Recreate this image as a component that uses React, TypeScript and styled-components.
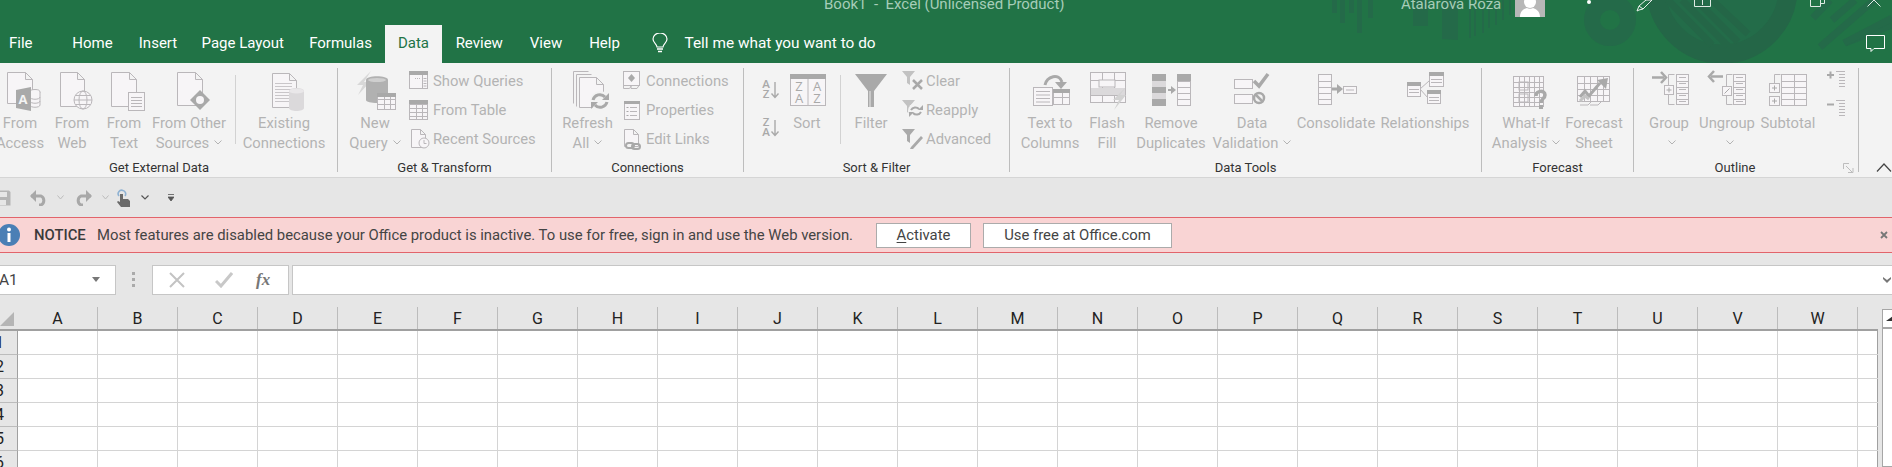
import type { ReactNode } from 'react';
import styled, { createGlobalStyle } from 'styled-components';

const STROKE = '#bab7ba';
const PAPER = '#f7f5f7';
const DARK = '#a9a9a9';
const SOFT = '#dbd9db';

const GlobalStyle = createGlobalStyle`
  html, body {
    margin: 0;
    padding: 0;
    background: #fff;
    overflow: hidden;
  }
  body {
    font-family: Roboto, "Open Sans", sans-serif;
  }
`;

const Page = styled.div`
  width: 1892px;
  height: 467px;
  overflow: hidden;
  display: flex;
  flex-direction: column;
`;

const Header = styled.div`
  position: relative;
  height: 63px;
  flex: none;
  background: #217346;
  overflow: hidden;
`;

const Pattern = styled.svg`
  position: absolute;
  left: 0;
  top: 0;
`;

const TitleRow = styled.div`
  position: relative;
  height: 25px;
  display: flex;
  align-items: flex-start;
  overflow: hidden;
`;

const TitleText = styled.div<{ $left: number; $width: number }>`
  margin-left: ${p => p.$left}px;
  width: ${p => p.$width}px;
  margin-top: -6px;
  line-height: 20px;
  font-size: 15px;
  color: #a6cdb8;
  white-space: pre;
  flex: none;
`;

const Avatar = styled.svg`
  flex: none;
  margin-left: 13px;
`;

const WindowIcon = styled.svg<{ $gap: number }>`
  flex: none;
  margin-left: ${p => p.$gap}px;
`;

const TabRow = styled.div`
  position: relative;
  height: 38px;
  display: flex;
  align-items: stretch;
`;

const Tab = styled.div<{ $w: number; $active?: boolean; $left?: boolean }>`
  width: ${p => p.$w}px;
  flex: none;
  display: flex;
  align-items: center;
  justify-content: ${p => (p.$left ? 'flex-start' : 'center')};
  padding-left: ${p => (p.$left ? 9 : 0)}px;
  box-sizing: border-box;
  padding-bottom: 2px;
  font-size: 15px;
  color: ${p => (p.$active ? '#217346' : '#fff')};
  background: ${p => (p.$active ? '#f3f3f3' : 'transparent')};
`;

const TellMe = styled.div`
  display: flex;
  align-items: center;
  gap: 17px;
  margin-left: 18px;
  padding-bottom: 2px;
  font-size: 15.4px;
  color: #fff;
`;

const CommentIcon = styled.svg`
  margin-left: auto;
  margin-right: 7px;
  margin-top: 10px;
`;

const Ribbon = styled.div`
  height: 115px;
  flex: none;
  box-sizing: border-box;
  display: flex;
  background: #f3f3f3;
  border-bottom: 1px solid #d5d5d5;
  margin-left: -19px;
  width: 1911px;
`;

const Group = styled.div<{ $w: number; $pad?: number }>`
  position: relative;
  width: ${p => p.$w}px;
  flex: none;
  box-sizing: border-box;
  margin: 5px 0;
  height: 104px;
  border-right: 1px solid #bdbdbd;
  display: flex;
  flex-direction: column;
  padding-left: ${p => p.$pad || 0}px;
`;

const GroupBody = styled.div`
  height: 89px;
  display: flex;
  flex: none;
`;

const GroupLabel = styled.div<{ $shift?: number; $back?: number }>`
  height: 15px;
  line-height: 21px;
  margin-left: -${p => p.$back || 0}px;
  padding-right: ${p => p.$shift || 0}px;
  text-align: center;
  font-size: 13px;
  color: #333;
`;

const BigButton = styled.div<{ $w: number }>`
  width: ${p => p.$w}px;
  flex: none;
  display: flex;
  flex-direction: column;
  align-items: center;
`;

const IconBox = styled.div`
  height: 45px;
  flex: none;
`;

const BigLine = styled.div`
  height: 20px;
  line-height: 20px;
  white-space: nowrap;
  font-size: 14.8px;
  color: #b3b3b3;
  display: flex;
  align-items: center;
  justify-content: center;
`;

const Caret = styled.svg`
  margin-left: 5px;
  margin-top: -2px;
`;

const InnerSep = styled.div<{ $left: number }>`
  width: 1px;
  height: 69px;
  margin: 7px 0 0 ${p => p.$left}px;
  background: #d2d2d2;
  flex: none;
`;

const Stack = styled.div<{ $w?: number }>`
  flex: ${p => (p.$w ? 'none' : 1)};
  width: ${p => (p.$w ? `${p.$w}px` : 'auto')};
  margin-top: -2px;
  display: flex;
  flex-direction: column;
`;

const SmallRow = styled.div`
  height: 29px;
  display: flex;
  align-items: center;
  white-space: nowrap;
  font-size: 14.8px;
  color: #b3b3b3;
`;

const SmallIcon = styled.svg`
  flex: none;
  width: 24px;
  height: 24px;
  margin-right: 1px;
`;

const SortColumn = styled.div`
  width: 24px;
  margin-left: 13px;
  flex: none;
  display: flex;
  flex-direction: column;
  gap: 14px;
  padding-top: 10px;
`;

const Launcher = styled.svg`
  position: absolute;
  right: 4px;
  bottom: -2px;
`;

const Collapse = styled.div`
  flex: 1;
  display: flex;
  align-items: flex-end;
  justify-content: flex-start;
  padding: 0 0 5px 17px;
`;

const QuickBar = styled.div`
  height: 39px;
  flex: none;
  background: #e6e6e6;
  display: flex;
  align-items: center;
`;

const QuickIcon = styled.svg<{ $left: number }>`
  flex: none;
  margin-left: ${p => p.$left}px;
`;

const Notice = styled.div`
  height: 36px;
  flex: none;
  box-sizing: border-box;
  background: #f9d4d4;
  border-top: 1px solid #e2646b;
  border-bottom: 1px solid #e2646b;
  display: flex;
  align-items: center;
  color: #444;
  font-size: 14.85px;
`;

const InfoIcon = styled.svg`
  flex: none;
  margin-left: -2px;
`;

const NoticeTitle = styled.span`
  margin-left: 14px;
  width: 63px;
  flex: none;
  font-weight: 500;
  color: #3a3a3a;
`;

const NoticeText = styled.span`
  width: 779px;
  flex: none;
  white-space: nowrap;
`;

const NoticeButton = styled.div<{ $w: number; $gap: number }>`
  width: ${p => p.$w}px;
  margin-left: ${p => p.$gap}px;
  height: 25px;
  box-sizing: border-box;
  flex: none;
  background: #fff;
  border: 1px solid #ababab;
  display: flex;
  align-items: center;
  justify-content: center;
  color: #444;
  u {
    text-underline-offset: 2px;
  }
`;

const NoticeClose = styled.svg`
  margin-left: auto;
  margin-right: 4px;
`;

const FormulaBar = styled.div`
  height: 44px;
  flex: none;
  box-sizing: border-box;
  background: #e6e6e6;
  padding-top: 12px;
  display: flex;
  align-items: flex-start;
`;

const NameBox = styled.div`
  width: 117px;
  height: 30px;
  margin-left: -1px;
  flex: none;
  box-sizing: border-box;
  background: #fff;
  border: 1px solid #c6c6c6;
  display: flex;
  align-items: center;
  font-size: 15.5px;
  color: #444;
`;

const NameText = styled.span`
  flex: 1;
  margin-left: -1px;
`;

const Grip = styled.svg`
  flex: none;
  margin: 6px 17px 0 16px;
`;

const FuncBox = styled.div`
  width: 137px;
  height: 30px;
  flex: none;
  box-sizing: border-box;
  background: #fff;
  border: 1px solid #c6c6c6;
  display: flex;
  align-items: center;
`;

const FuncIcon = styled.svg<{ $left: number }>`
  flex: none;
  margin-left: ${p => p.$left}px;
`;

const FormulaInput = styled.div`
  flex: 1;
  height: 30px;
  margin-left: 3px;
  box-sizing: border-box;
  background: #fff;
  border: 1px solid #c6c6c6;
  border-right: none;
  display: flex;
  align-items: center;
  justify-content: flex-end;
  padding-right: 1px;
`;

const FxText = styled.span`
  font-family: "Liberation Serif", serif;
  font-style: italic;
  font-weight: 700;
  font-size: 17px;
  color: #777;
  margin-left: 23px;
`;

const Sheet = styled.div`
  flex: 1;
  display: flex;
  background: #e6e6e6;
  min-height: 0;
`;

const SheetGrid = styled.div`
  width: 1878px;
  flex: none;
  display: flex;
  flex-direction: column;
  background: #fff;
`;

const ColumnHeader = styled.div`
  height: 34px;
  flex: none;
  box-sizing: border-box;
  display: flex;
  background: #e6e6e6;
  border-bottom: 2px solid #a0a0a0;
  padding-top: 10px;
`;

const Corner = styled.div`
  width: 18px;
  flex: none;
  display: flex;
  align-items: flex-end;
`;

const ColumnCell = styled.div<{ $w: number }>`
  width: ${p => p.$w}px;
  flex: none;
  box-sizing: border-box;
  border-right: 1px solid #bcbcbc;
  line-height: 24px;
  text-align: center;
  font-size: 16px;
  color: #222;
`;

const Row = styled.div`
  height: 24px;
  flex: none;
  box-sizing: border-box;
  display: flex;
  border-bottom: 1px solid #d4d4d4;
`;

const RowNumber = styled.div`
  width: 18px;
  flex: none;
  box-sizing: border-box;
  margin-bottom: -1px;
  background: #e6e6e6;
  border-right: 1px solid #a0a0a0;
  border-bottom: 1px solid #bcbcbc;
  overflow: hidden;
  display: flex;
  align-items: center;
  justify-content: center;
  font-size: 16px;
  color: #222;
`;

const RowDigit = styled.span`
  margin-left: -18px;
`;

const Cell = styled.div<{ $w: number }>`
  width: ${p => p.$w}px;
  flex: none;
  box-sizing: border-box;
  border-right: 1px solid #d4d4d4;
`;

const TailCell = styled(Cell)`
  border-right: 1px solid #a0a0a0;
`;

const Scrollbar = styled.div`
  width: 14px;
  margin-left: 4px;
  margin-top: 12px;
  flex: none;
  box-sizing: border-box;
  background: #fff;
  border: 1px solid #a6a6a6;
  border-right: none;
  display: flex;
  flex-direction: column;
`;

const ScrollUp = styled.div`
  height: 19px;
  box-sizing: border-box;
  border-bottom: 2px solid #a6a6a6;
  display: flex;
  align-items: center;
  padding-left: 3px;
`;

// shared drawing pieces for the ribbon icons

const Doc = ({ x, y, w, h, f = 7 }: { x: number; y: number; w: number; h: number; f?: number }) => (
  <path
    d={`M${x} ${y}h${w - f}l${f} ${f}v${h - f}h${-w}zM${x + w - f} ${y}v${f}h${f}`}
    fill={PAPER}
    stroke={STROKE}
  />
);

const Lines = ({ x, y, w, n, gap, color = STROKE }: { x: number; y: number; w: number; n: number; gap: number; color?: string }) => (
  <path
    d={Array.from({ length: n }, (_, i) => `M${x} ${y + i * gap}h${w}`).join('')}
    stroke={color}
    fill="none"
  />
);

const Table = ({ x, y, w, h, cols, rows }: { x: number; y: number; w: number; h: number; cols: number; rows: number }) => {
  const v = Array.from({ length: cols - 1 }, (_, i) => `M${Math.round(x + ((i + 1) * w) / cols) + 0.5} ${y}v${h}`);
  const t = Array.from({ length: rows - 1 }, (_, i) => `M${x} ${Math.round(y + ((i + 1) * h) / rows) + 0.5}h${w}`);
  return (
    <>
      <rect x={x} y={y} width={w} height={h} fill={PAPER} stroke={STROKE} />
      <path d={[...v, ...t].join('')} stroke={STROKE} fill="none" />
    </>
  );
};

const Spin = ({ cx, cy, r, w = 3 }: { cx: number; cy: number; r: number; w?: number }) => (
  <g fill="none" stroke={DARK} strokeWidth={w}>
    <path d={`M${cx - r} ${cy - 1}A${r} ${r} 0 0 1 ${cx + r - 2} ${cy - r + 3}`} />
    <path d={`M${cx + r} ${cy + 1}A${r} ${r} 0 0 1 ${cx - r + 2} ${cy + r - 3}`} />
    <path d={`M${cx + r + 2} ${cy - r - 1}v${r}h${-r}z`} fill={DARK} stroke="none" />
    <path d={`M${cx - r - 2} ${cy + r + 1}v${-r}h${r}z`} fill={DARK} stroke="none" />
  </g>
);

const Funnel = ({ light }: { light?: boolean }) => (
  <path d="M1 2h13l-5 6v8l-3-2v-6z" fill={light ? '#c2c2c2' : DARK} />
);

const Big = ({ children }: { children: ReactNode }) => (
  <svg width="44" height="45" viewBox="0 0 44 45">
    {children}
  </svg>
);

const icons: Record<string, ReactNode> = {
  access: (
    <Big>
      <Doc x={9.5} y={4.5} w={25} h={31} />
      <ellipse cx="37" cy="24" rx="5" ry="2.5" fill={PAPER} stroke={STROKE} />
      <path d="M32 24v13c0 3 10 3 10 0V24M32 29c0 3 10 3 10 0M32 33c0 3 10 3 10 0" fill={PAPER} stroke={STROKE} />
      <path d="M18 22l15-3v24l-15-3z" fill={DARK} />
      <text x="25" y="36" textAnchor="middle" fontSize="13" fontWeight="700" fill="#f3f3f3" fontFamily="Open Sans">A</text>
    </Big>
  ),
  web: (
    <Big>
      <Doc x={10.5} y={4.5} w={24} h={34} />
      <circle cx="33" cy="32" r="9" fill={PAPER} stroke={STROKE} />
      <ellipse cx="33" cy="32" rx="4" ry="9" fill="none" stroke={STROKE} />
      <path d="M24 32h18M25.5 27.5h15M25.5 36.5h15" stroke={STROKE} fill="none" />
    </Big>
  ),
  text: (
    <Big>
      <Doc x={9.5} y={4.5} w={25} h={34} />
      <rect x="26.5" y="24.5" width="16" height="18" fill={PAPER} stroke={STROKE} />
      <Lines x={29} y={29.5} w={11} n={4} gap={3} />
    </Big>
  ),
  other: (
    <Big>
      <Doc x={10.5} y={4.5} w={25} h={33} />
      <path d="M33 22l10 10-10 10-10-10z" fill={DARK} />
      <circle cx="33" cy="32" r="6.5" fill={DARK} />
      <circle cx="33" cy="32" r="4" fill={PAPER} />
    </Big>
  ),
  existing: (
    <Big>
      <Doc x={10.5} y={5.5} w={24} h={34} />
      <Lines x={13} y={15.5} w={17} n={7} gap={3} color="#c9c6c9" />
      <path d="M27 23c0-4 15-4 15 0v17c0 4-15 4-15 0z" fill={SOFT} />
      <ellipse cx="34.5" cy="23" rx="7.5" ry="2.5" fill="#e9e7e9" />
    </Big>
  ),
  newQuery: (
    <Big>
      <path d="M18 3L4 17h6L5 27l12-13h-6z" fill="#d8d8d8" />
      <path d="M13 12c0-5 22-5 22 0v20c0 4-22 4-22 0z" fill="#b1b1b1" />
      <ellipse cx="24" cy="12" rx="9" ry="2" fill="#cfcfcf" />
      <Table x={24.5} y={25.5} w={18} h={16} cols={3} rows={3} />
      <rect x="24" y="25" width="19" height="4" fill={DARK} />
    </Big>
  ),
  refresh: (
    <Big>
      <path d="M7.5 3.5h15M7.5 3.5v32M10.5 6.5h15M10.5 6.5v32" fill="none" stroke={STROKE} />
      <Doc x={13.5} y={9.5} w={24} h={30} />
      <circle cx="34" cy="33" r="10" fill="#f3f3f3" />
      <Spin cx={34} cy={33} r={7} />
    </Big>
  ),
  sort: (
    <Big>
      <rect x="5.5" y="6.5" width="35" height="31" fill={PAPER} stroke={STROKE} />
      <rect x="5" y="6" width="36" height="5" fill={DARK} />
      <path d="M23 11v26" stroke={STROKE} />
      <g fontFamily="Open Sans" fontSize="13" fill={DARK} textAnchor="middle">
        <text x="14" y="23">Z</text>
        <text x="14" y="35">A</text>
        <text x="32" y="23">A</text>
        <text x="32" y="35">Z</text>
      </g>
    </Big>
  ),
  filter: (
    <Big>
      <path d="M6 6h32L25 23v16h-6V23z" fill={DARK} />
      <path d="M21 23v16" stroke="#c9c9c9" strokeWidth="2" />
    </Big>
  ),
  textCols: (
    <Big>
      <path d="M17 17c2-9 14-12 17-3" fill="none" stroke={DARK} strokeWidth="3" />
      <path d="M27 14h12l-6 7z" fill={DARK} />
      <rect x="5.5" y="19.5" width="19" height="18" fill={PAPER} stroke={STROKE} />
      <Lines x={8} y={23.5} w={14} n={4} gap={3.5} />
      <Table x={25.5} y={21.5} w={16} h={15} cols={2} rows={2} />
      <rect x="25" y="21" width="17" height="4" fill={DARK} />
    </Big>
  ),
  flash: (
    <Big>
      <Table x={5.5} y={4.5} w={35} h={30} cols={3} rows={4} />
      <rect x="14" y="12" width="16" height="7" fill={PAPER} stroke={STROKE} />
      <rect x="6" y="20" width="34" height="7" fill={SOFT} />
      <path d="M41 19l-13 13h6l-5 10 12-15h-6z" fill="#d2d2d2" />
    </Big>
  ),
  remove: (
    <Big>
      <rect x="3" y="6" width="14" height="32" fill={DARK} />
      <rect x="3" y="13" width="14" height="6" fill={SOFT} />
      <rect x="3" y="25" width="14" height="6" fill={SOFT} />
      <Table x={28.5} y={6.5} w={13} h={31} cols={1} rows={5} />
      <rect x="28" y="6" width="14" height="7" fill={DARK} />
      <path d="M19 22h4" stroke={DARK} strokeWidth="2" />
      <path d="M22 18l5 4-5 4z" fill={DARK} />
    </Big>
  ),
  validation: (
    <Big>
      <rect x="4.5" y="11.5" width="18" height="9" fill={PAPER} stroke={STROKE} />
      <rect x="4.5" y="26.5" width="18" height="9" fill={PAPER} stroke={STROKE} />
      <path d="M24 13l5 5 9-12" fill="none" stroke={DARK} strokeWidth="3.5" />
      <circle cx="29" cy="30" r="5" fill="#f3f3f3" stroke={DARK} strokeWidth="2.5" />
      <path d="M25.5 26.5l7 7" stroke={DARK} strokeWidth="2.5" />
    </Big>
  ),
  consolidate: (
    <Big>
      <Table x={4.5} y={6.5} w={13} h={30} cols={1} rows={5} />
      <path d="M18 21h6" stroke={DARK} strokeWidth="3" />
      <path d="M23 16l6 5-6 5z" fill={DARK} />
      <rect x="29.5" y="18.5" width="13" height="7" fill={PAPER} stroke={STROKE} />
      <path d="M32 22h8" stroke={STROKE} />
    </Big>
  ),
  relations: (
    <Big>
      <path d="M17 21l9-8M17 21l8 9" stroke={STROKE} fill="none" />
      <rect x="4.5" y="14.5" width="13" height="14" fill={PAPER} stroke={STROKE} />
      <rect x="4" y="14" width="14" height="4" fill={DARK} />
      <Lines x={6} y={21.5} w={10} n={2} gap={3} />
      <rect x="26.5" y="4.5" width="14" height="14" fill={PAPER} stroke={STROKE} />
      <rect x="26" y="4" width="15" height="4" fill={DARK} />
      <Lines x={28} y={11.5} w={11} n={2} gap={3} />
      <rect x="24.5" y="22.5" width="13" height="13" fill={PAPER} stroke={STROKE} />
      <rect x="24" y="22" width="14" height="4" fill={DARK} />
      <Lines x={26} y={29.5} w={10} n={2} gap={3} />
    </Big>
  ),
  whatIf: (
    <Big>
      <Table x={9.5} y={8.5} w={30} h={30} cols={6} rows={6} />
      <rect x="15" y="14" width="9" height="8" fill="none" stroke={STROKE} />
      <rect x="15" y="26" width="9" height="8" fill="none" stroke={STROKE} />
      <path d="M32 28c0-6 9-6 9-1 0 4-4 3-4 8" fill="none" stroke={DARK} strokeWidth="3.5" />
      <rect x="35" y="37" width="4" height="4" fill={DARK} />
    </Big>
  ),
  forecast: (
    <Big>
      <Table x={5.5} y={8.5} w={32} h={25} cols={5} rows={4} />
      <path d="M8 37h8l3-3M18 37h8l3-3" fill="none" stroke={STROKE} />
      <path d="M8 29l5-6 4 5 11-13" fill="none" stroke={DARK} strokeWidth="3" />
      <path d="M25 12l11-2-2 11z" fill={DARK} />
      <path d="M8 33l5-5 4 3" fill="none" stroke="#c4c4c4" strokeWidth="3" />
    </Big>
  ),
  group: (
    <Big>
      <path d="M5 9.5h12" stroke={DARK} strokeWidth="2.5" />
      <path d="M14 4l5 5.5-5 5.5" fill="none" stroke={DARK} strokeWidth="2.5" />
      <path d="M27.5 6.5h-6v30h6" fill="none" stroke={STROKE} />
      <rect x="17.5" y="17.5" width="9" height="9" fill={PAPER} stroke={STROKE} />
      <path d="M22 19.5v5M19.5 22h5" stroke={DARK} />
      <Table x={29.5} y={6.5} w={12} h={30} cols={1} rows={5} />
      <Lines x={32} y={9.5} w={7} n={5} gap={6} />
    </Big>
  ),
  ungroup: (
    <Big>
      <path d="M6 8.5h12" stroke={DARK} strokeWidth="2.5" />
      <path d="M9 3L4 8.5 9 14" fill="none" stroke={DARK} strokeWidth="2.5" />
      <path d="M27.5 6.5h-6v30h6" fill="none" stroke={STROKE} />
      <rect x="17.5" y="18.5" width="9" height="9" fill={PAPER} stroke={STROKE} />
      <path d="M19.5 25.5l5-5" stroke={DARK} />
      <Table x={28.5} y={6.5} w={12} h={30} cols={1} rows={5} />
      <Lines x={31} y={9.5} w={7} n={5} gap={6} />
    </Big>
  ),
  subtotal: (
    <Big>
      <path d="M8.5 15.5v-9h6" fill="none" stroke={STROKE} />
      <Table x={15.5} y={6.5} w={25} h={31} cols={2} rows={5} />
      <rect x="3.5" y="15.5" width="10" height="9" fill={PAPER} stroke={STROKE} />
      <rect x="3.5" y="28.5" width="10" height="9" fill={PAPER} stroke={STROKE} />
      <path d="M8.5 17.5v5M6 20h5M8.5 30.5v5M6 33h5" stroke={DARK} />
    </Big>
  ),
};

const small: Record<string, ReactNode> = {
  queries: (
    <>
      <rect x="1.5" y="2.5" width="18" height="17" fill={PAPER} stroke={STROKE} />
      <rect x="1" y="2" width="19" height="4" fill={DARK} />
      <path d="M14.5 6v13" stroke={STROKE} />
      <Lines x={15.5} y={9.5} w={3} n={4} gap={2.5} />
      <path d="M7 9.5h6" stroke={STROKE} strokeDasharray="1 1" />
    </>
  ),
  table: (
    <>
      <Table x={1.5} y={2.5} w={18} h={19} cols={3} rows={5} />
      <rect x="1" y="2" width="19" height="4" fill={DARK} />
    </>
  ),
  recent: (
    <>
      <Doc x={3.5} y={2.5} w={14} h={18} f={5} />
      <circle cx="16" cy="16" r="5" fill={PAPER} stroke={STROKE} />
      <path d="M16 13v3.5h2.5" stroke={STROKE} fill="none" />
    </>
  ),
  connection: (
    <>
      <rect x="2.5" y="2.5" width="16" height="14" fill={PAPER} stroke={STROKE} />
      <path d="M10.5 5l3.5 4-3.5 4-3.5-4z" fill={DARK} />
      <path d="M2.5 16.5v3h6l2-3M10 16.5v3h6l2-3" fill="none" stroke={STROKE} />
    </>
  ),
  properties: (
    <>
      <rect x="3.5" y="3.5" width="15" height="18" fill={PAPER} stroke={STROKE} />
      <rect x="3" y="3" width="16" height="3" fill={DARK} />
      <Lines x={9} y={9.5} w={7} n={3} gap={4} />
      <path d="M5.5 9.5h2M5.5 13.5h2M5.5 17.5h2" stroke={DARK} />
    </>
  ),
  links: (
    <>
      <Doc x={3.5} y={2.5} w={14} h={17} f={5} />
      <rect x="5" y="16" width="8" height="5" rx="2.5" fill="#f3f3f3" stroke={DARK} strokeWidth="2" />
      <rect x="11" y="17" width="8" height="5" rx="2.5" fill="none" stroke={DARK} strokeWidth="2" />
    </>
  ),
  clear: (
    <>
      <Funnel light />
      <path d="M12 11l9 9M21 11l-9 9" stroke={DARK} strokeWidth="2.5" />
    </>
  ),
  reapply: (
    <>
      <Funnel light />
      <circle cx="15" cy="13" r="8" fill="#f3f3f3" />
      <Spin cx={15} cy={13} r={5} w={2} />
    </>
  ),
  advanced: (
    <>
      <Funnel />
      <path d="M10 20l10-11 2 2-10 11h-3z" fill={DARK} />
    </>
  ),
  showDetail: (
    <>
      <path d="M1 6h7M4.5 2.5v7" stroke={DARK} strokeWidth="2" />
      <Lines x={10} y={2.5} w={9} n={1} gap={0} />
      <Lines x={13} y={5.5} w={6} n={5} gap={3} />
    </>
  ),
  hideDetail: (
    <>
      <path d="M1 6.5h7" stroke={DARK} strokeWidth="2" />
      <Lines x={10} y={2.5} w={9} n={1} gap={0} />
      <Lines x={13} y={5.5} w={6} n={5} gap={3} />
    </>
  ),
};

const Chevron = () => (
  <Caret width="8" height="5" viewBox="0 0 8 5">
    <path d="M.5.5L4 4 7.5.5" fill="none" stroke="#b3b3b3" />
  </Caret>
);

type BigProps = { w: number; icon: string; lines: string[]; caret?: 'inline' | 'below' };

const BigBtn = ({ w, icon, lines, caret }: BigProps) => (
  <BigButton $w={w}>
    <IconBox>{icons[icon]}</IconBox>
    {lines.map((l, i) => (
      <BigLine key={l}>
        {l}
        {caret === 'inline' && i === lines.length - 1 && <Chevron />}
      </BigLine>
    ))}
    {caret === 'below' && (
      <BigLine>
        <Chevron />
      </BigLine>
    )}
  </BigButton>
);

const SmallBtn = ({ icon, label }: { icon: string; label?: string }) => (
  <SmallRow>
    <SmallIcon viewBox="0 0 24 24">{small[icon]}</SmallIcon>
    {label}
  </SmallRow>
);

const SortLetters = ({ top, bottom }: { top: string; bottom: string }) => (
  <svg width="24" height="24" viewBox="0 0 24 24">
    <g fontFamily="Open Sans" fontSize="11.5" fontWeight="600" fill={DARK} textAnchor="middle">
      <text x="9" y="10">{top}</text>
      <text x="9" y="20">{bottom}</text>
    </g>
    <path d="M18 4v15M14.5 15.5L18 19.5l3.5-4" fill="none" stroke={DARK} strokeWidth="1.4" />
  </svg>
);

const tabs = [
  { name: 'File', w: 58.5, left: true },
  { name: 'Home', w: 68 },
  { name: 'Insert', w: 63 },
  { name: 'Page Layout', w: 106.5 },
  { name: 'Formulas', w: 89 },
  { name: 'Data', w: 57, active: true },
  { name: 'Review', w: 74.5 },
  { name: 'View', w: 59 },
  { name: 'Help', w: 58 },
];

const columns = 'ABCDEFGHIJKLMNOPQRSTUVW'.split('');
const rows = [1, 2, 3, 4, 5, 6];

export default function App() {
  return (
    <Page>
      <GlobalStyle />
      <Header>
        <Pattern width="1892" height="63" viewBox="0 0 1892 63">
          <g fill="#246a49">
            <rect x="1332" y="0" width="5" height="13" />
            <rect x="1340" y="0" width="5" height="23" />
            <rect x="1349" y="0" width="5" height="13" />
            <rect x="1357" y="0" width="5" height="33" />
            <rect x="1368" y="0" width="5" height="18" />
            <rect x="1413" y="0" width="15" height="26" />
            <path d="M1442 0h16v40l-16-1z" />
            <rect x="1469" y="0" width="2" height="38" />
            <rect x="1474" y="0" width="2" height="36" />
            <rect x="1482" y="0" width="2" height="33" />
            <rect x="1488" y="0" width="2" height="28" />
            <rect x="1495" y="0" width="2" height="25" />
            <rect x="1502" y="0" width="2" height="20" />
            <rect x="1509" y="0" width="2" height="15" />
          </g>
          <circle cx="1610" cy="20" r="18" fill="none" stroke="#246a49" strokeWidth="16" />
          <circle cx="1722" cy="-12" r="66" fill="#236c49" stroke="#246647" strokeWidth="19" />
          <path d="M1668 0l44 45M1682 0l46 46M1696 0l42 42M1712 0l36 34" stroke="#246647" strokeWidth="7" />
          <g stroke="#246a49" fill="none">
            <path d="M1880-5l-60 52M1892 25l-47 18" strokeWidth="7" />
            <path d="M1892 18l-48 25M1855 0l-23 20M1830 0l-17 18" strokeWidth="7" />
          </g>
        </Pattern>
        <TitleRow>
          <TitleText $left={824} $width={577}>Book1  -  Excel (Unlicensed Product)</TitleText>
          <TitleText $left={0} $width={101}>Atalarova Roza</TitleText>
          <Avatar width="30" height="17" viewBox="0 0 30 17">
            <rect width="30" height="17" fill="#b7b7b7" />
            <path d="M5 17c0-6 4-8 7-9 1 1 5 1 6 0 3 1 7 3 7 9z" fill="#fff" />
            <ellipse cx="15" cy="2" rx="6" ry="6" fill="#fff" />
          </Avatar>
          <WindowIcon $gap={42} width="4" height="5" viewBox="0 0 4 5">
            <circle cx="2" cy="2" r="2" fill="#fff" />
          </WindowIcon>
          <WindowIcon $gap={45} width="18" height="12" viewBox="0 0 18 12">
            <path d="M1 11l2-5 7-6h6l-9 9-4 1zM3 6l4 3" fill="none" stroke="#e8f1ec" />
          </WindowIcon>
          <WindowIcon $gap={40} width="17" height="7" viewBox="0 0 17 7">
            <path d="M.5 0v6.5h16V0M8.5 0v5" fill="none" stroke="#dfeae4" />
          </WindowIcon>
          <WindowIcon $gap={99} width="15" height="7" viewBox="0 0 15 7">
            <path d="M.5 0v6.5h10V0M11 3.5h3.5V0" fill="none" stroke="#dfeae4" />
          </WindowIcon>
          <WindowIcon $gap={42} width="14" height="7" viewBox="0 0 14 7">
            <path d="M.5 6.5L7 0l6.5 6.5" fill="none" stroke="#dfeae4" />
          </WindowIcon>
        </TitleRow>
        <TabRow>
          {tabs.map(t => (
            <Tab key={t.name} $w={t.w} $active={t.active} $left={t.left}>
              {t.name}
            </Tab>
          ))}
          <TellMe>
            <svg width="16" height="20" viewBox="0 0 16 20">
              <path d="M5 14c0-3-4-4-4-8a7 6 0 0114 0c0 4-4 5-4 8z" fill="none" stroke="#fff" strokeWidth="1.2" />
              <path d="M5 16h6M6 18.5h4" stroke="#fff" strokeWidth="1.4" />
            </svg>
            Tell me what you want to do
          </TellMe>
          <CommentIcon width="19" height="17" viewBox="0 0 19 17">
            <path d="M.5.5h18v13H8l-3 3v-3H.5z" fill="none" stroke="#fff" />
          </CommentIcon>
        </TabRow>
      </Header>

      <Ribbon>
        <Group $w={357} $pad={15}>
          <GroupBody>
            <BigBtn w={48} icon="access" lines={['From', 'Access']} />
            <BigBtn w={56} icon="web" lines={['From', 'Web']} />
            <BigBtn w={48} icon="text" lines={['From', 'Text']} />
            <BigBtn w={82} icon="other" lines={['From Other', 'Sources']} caret="inline" />
            <InnerSep $left={5} />
            <BigBtn w={96} icon="existing" lines={['Existing', 'Connections']} />
          </GroupBody>
          <GroupLabel $back={15}>Get External Data</GroupLabel>
        </Group>
        <Group $w={214} $pad={4}>
          <GroupBody>
            <BigBtn w={66} icon="newQuery" lines={['New', 'Query']} caret="inline" />
            <Stack>
              <SmallBtn icon="queries" label="Show Queries" />
              <SmallBtn icon="table" label="From Table" />
              <SmallBtn icon="recent" label="Recent Sources" />
            </Stack>
          </GroupBody>
          <GroupLabel $back={4}>Get &amp; Transform</GroupLabel>
        </Group>
        <Group $w={192} $pad={2}>
          <GroupBody>
            <BigBtn w={67} icon="refresh" lines={['Refresh', 'All']} caret="inline" />
            <Stack>
              <SmallBtn icon="connection" label="Connections" />
              <SmallBtn icon="properties" label="Properties" />
              <SmallBtn icon="links" label="Edit Links" />
            </Stack>
          </GroupBody>
          <GroupLabel $back={2}>Connections</GroupLabel>
        </Group>
        <Group $w={266}>
          <GroupBody>
            <SortColumn>
              <SortLetters top="A" bottom="Z" />
              <SortLetters top="Z" bottom="A" />
            </SortColumn>
            <BigBtn w={52} icon="sort" lines={['Sort']} />
            <InnerSep $left={7} />
            <BigBtn w={60} icon="filter" lines={['Filter']} />
            <Stack>
              <SmallBtn icon="clear" label="Clear" />
              <SmallBtn icon="reapply" label="Reapply" />
              <SmallBtn icon="advanced" label="Advanced" />
            </Stack>
          </GroupBody>
          <GroupLabel>Sort &amp; Filter</GroupLabel>
        </Group>
        <Group $w={472}>
          <GroupBody>
            <BigBtn w={80} icon="textCols" lines={['Text to', 'Columns']} />
            <BigBtn w={34} icon="flash" lines={['Flash', 'Fill']} />
            <BigBtn w={94} icon="remove" lines={['Remove', 'Duplicates']} />
            <BigBtn w={68} icon="validation" lines={['Data', 'Validation']} caret="inline" />
            <BigBtn w={100} icon="consolidate" lines={['Consolidate']} />
            <BigBtn w={78} icon="relations" lines={['Relationships']} />
          </GroupBody>
          <GroupLabel>Data Tools</GroupLabel>
        </Group>
        <Group $w={152}>
          <GroupBody>
            <BigBtn w={88} icon="whatIf" lines={['What-If', 'Analysis']} caret="inline" />
            <BigBtn w={48} icon="forecast" lines={['Forecast', 'Sheet']} />
          </GroupBody>
          <GroupLabel>Forecast</GroupLabel>
        </Group>
        <Group $w={225}>
          <GroupBody>
            <BigBtn w={70} icon="group" lines={['Group']} caret="below" />
            <BigBtn w={46} icon="ungroup" lines={['Ungroup']} caret="below" />
            <BigBtn w={76} icon="subtotal" lines={['Subtotal']} />
            <Stack $w={24}>
              <SmallBtn icon="showDetail" />
              <SmallBtn icon="hideDetail" />
            </Stack>
          </GroupBody>
          <GroupLabel $shift={22}>Outline</GroupLabel>
          <Launcher width="11" height="11" viewBox="0 0 11 11">
            <path d="M.5 6V.5H6M3 3l6 6M5 9.5h5V5" fill="none" stroke="#bdbdbd" />
          </Launcher>
        </Group>
        <Collapse>
          <svg width="16" height="9" viewBox="0 0 16 9">
            <path d="M1 8.5L8 1l7 7.5" fill="none" stroke="#444" strokeWidth="1.2" />
          </svg>
        </Collapse>
      </Ribbon>

      <QuickBar>
        <QuickIcon $left={-4} width="15" height="16" viewBox="0 0 15 16">
          <path d="M0 .5h13l1.5 1.5v13.5H0z" fill="#b5b5b5" />
          <rect x="3" y="2" width="8" height="5" fill="#e6e6e6" />
          <rect x="4" y="10" width="6" height="5" fill="#e6e6e6" />
        </QuickIcon>
        <QuickIcon $left={18} width="19" height="16" viewBox="0 0 19 16">
          <path d="M2 6h10a5 5 0 010 9h-2" fill="none" stroke="#a8a8a8" strokeWidth="3" />
          <path d="M7 0L1 6l6 6z" fill="#a8a8a8" />
        </QuickIcon>
        <QuickIcon $left={9} width="7" height="5" viewBox="0 0 7 5">
          <path d="M.5.5L3.5 4l3-3.5" fill="none" stroke="#bbb" />
        </QuickIcon>
        <QuickIcon $left={10} width="19" height="16" viewBox="0 0 19 16">
          <path d="M17 6H7a5 5 0 000 9h2" fill="none" stroke="#a8a8a8" strokeWidth="3" />
          <path d="M12 0l6 6-6 6z" fill="#a8a8a8" />
        </QuickIcon>
        <QuickIcon $left={9} width="7" height="5" viewBox="0 0 7 5">
          <path d="M.5.5L3.5 4l3-3.5" fill="none" stroke="#bbb" />
        </QuickIcon>
        <QuickIcon $left={7} width="15" height="18" viewBox="0 0 15 18">
          <path d="M3 7a3.5 3.5 0 014-5.5A3.5 3.5 0 019 7" fill="none" stroke="#8fb2d3" strokeWidth="1.6" />
          <path d="M4 5h3v5h5l2 2v6H5L1 13l1-1 2 1z" fill="#6a6a6a" />
        </QuickIcon>
        <QuickIcon $left={10} width="8" height="5" viewBox="0 0 8 5">
          <path d="M.5.5L4 4l3.5-3.5" fill="none" stroke="#555" strokeWidth="1.2" />
        </QuickIcon>
        <QuickIcon $left={19} width="6" height="8" viewBox="0 0 6 8">
          <path d="M0 .5h6M0 3h6l-3 4z" fill="#555" stroke="#555" strokeWidth=".8" />
        </QuickIcon>
      </QuickBar>

      <Notice>
        <InfoIcon width="22" height="22" viewBox="0 0 22 22">
          <circle cx="11" cy="11" r="11" fill="#4a7fb5" />
          <rect x="9.5" y="9" width="3" height="9" fill="#fff" />
          <circle cx="11" cy="5.5" r="2" fill="#fff" />
        </InfoIcon>
        <NoticeTitle>NOTICE</NoticeTitle>
        <NoticeText>Most features are disabled because your Office product is inactive. To use for free, sign in and use the Web version.</NoticeText>
        <NoticeButton $w={95} $gap={0}>
          <span><u>A</u>ctivate</span>
        </NoticeButton>
        <NoticeButton $w={189} $gap={12}>Use free at Office.com</NoticeButton>
        <NoticeClose width="8" height="8" viewBox="0 0 8 8">
          <path d="M1 1l6 6M7 1L1 7" stroke="#777" strokeWidth="1.8" />
        </NoticeClose>
      </Notice>

      <FormulaBar>
        <NameBox>
          <NameText>A1</NameText>
          <svg width="26" height="6" viewBox="0 0 26 6">
            <path d="M3 0h8L7 5z" fill="#777" />
          </svg>
        </NameBox>
        <Grip width="3" height="17" viewBox="0 0 3 17">
          <path d="M0 1h3v3H0zM0 7h3v3H0zM0 13h3v3H0z" fill="#aaa" />
        </Grip>
        <FuncBox>
          <FuncIcon $left={16} width="16" height="16" viewBox="0 0 16 16">
            <path d="M1 1l14 14M15 1L1 15" stroke="#c3c3c3" strokeWidth="2" />
          </FuncIcon>
          <FuncIcon $left={30} width="18" height="16" viewBox="0 0 18 16">
            <path d="M1 9l5 5L17 1" fill="none" stroke="#c8c8c8" strokeWidth="3" />
          </FuncIcon>
          <FxText>fx</FxText>
        </FuncBox>
        <FormulaInput>
          <svg width="8" height="6" viewBox="0 0 8 6">
            <path d="M0 0l4 3 4-3v2L4 6 0 2z" fill="#777" />
          </svg>
        </FormulaInput>
      </FormulaBar>

      <Sheet>
        <SheetGrid>
          <ColumnHeader>
            <Corner>
              <svg width="18" height="21" viewBox="0 0 18 21">
                <path d="M0 18L14 4v14z" fill="#b5b5b5" />
              </svg>
            </Corner>
            {columns.map(c => (
              <ColumnCell key={c} $w={80}>{c}</ColumnCell>
            ))}
          </ColumnHeader>
          {rows.map(r => (
            <Row key={r}>
              <RowNumber>
                <RowDigit>{r}</RowDigit>
              </RowNumber>
              {columns.map(c => (
                <Cell key={c} $w={80} />
              ))}
              <TailCell $w={20} />
            </Row>
          ))}
        </SheetGrid>
        <Scrollbar>
          <ScrollUp>
            <svg width="7" height="5" viewBox="0 0 7 5">
              <path d="M0 5L7 0v5z" fill="#333" />
            </svg>
          </ScrollUp>
        </Scrollbar>
      </Sheet>
    </Page>
  );
}
